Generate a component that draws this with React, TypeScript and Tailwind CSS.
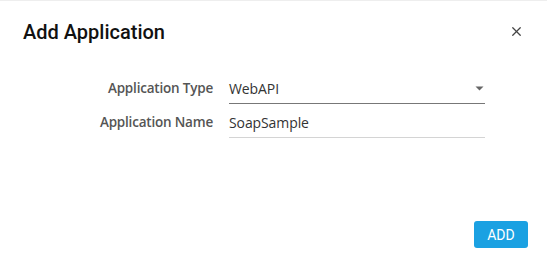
import { X } from 'lucide-react';

const labelFont = { fontFamily: '"Open Sans", "Noto Sans", sans-serif' };

function Field({ label, value, select }: { label: string; value: string; select?: boolean }) {
  return (
    <div className="flex items-end h-[26px]">
      <div
        className="w-[213px] text-right text-[13.5px] font-semibold text-[#555] leading-[26px] pb-[3px] tracking-[-0.2px]"
        style={labelFont}
      >
        {label}
      </div>
      <div
        className={`ml-[16px] w-[256px] h-[26px] pb-[4px] flex items-center justify-between border-b ${
          select ? 'border-[#777]' : 'border-[#d4d4d4]'
        }`}
      >
        <span className="text-[14px] text-[#333] leading-none tracking-[-0.1px]" style={labelFont}>
          {value}
        </span>
        {select && (
          <svg width="9" height="5" viewBox="0 0 9 5" className="mr-[1px]">
            <path d="M0.5 0.5h8L4.5 4.5z" fill="#666" />
          </svg>
        )}
      </div>
    </div>
  );
}

export default function App() {
  return (
    <div className="w-[547px] h-[269px] bg-white border-t border-[#eee] flex flex-col">
      <div className="flex items-center justify-between pl-[23px] pr-[24px] pt-[17px] h-[44px]">
        <h1
          className="text-[20px] font-medium text-[#111] leading-none"
          style={{ fontFamily: 'Roboto, sans-serif' }}
        >
          Add Application
        </h1>
        <X size={15} strokeWidth={2} className="text-[#444] -mr-[1px]" />
      </div>
      <div className="flex flex-col gap-[8px] mt-[33px]">
        <Field label="Application Type" value="WebAPI" select />
        <Field label="Application Name" value="SoapSample" />
      </div>
      <div className="flex-1" />
      <div className="flex justify-end pr-[19px] pb-[21px]">
        <button
          className="w-[54px] h-[27px] rounded-[3px] bg-[#1ba1e2] text-white text-[14px] font-normal leading-none"
          style={{ fontFamily: 'Roboto, sans-serif' }}
        >
          ADD
        </button>
      </div>
    </div>
  );
}
